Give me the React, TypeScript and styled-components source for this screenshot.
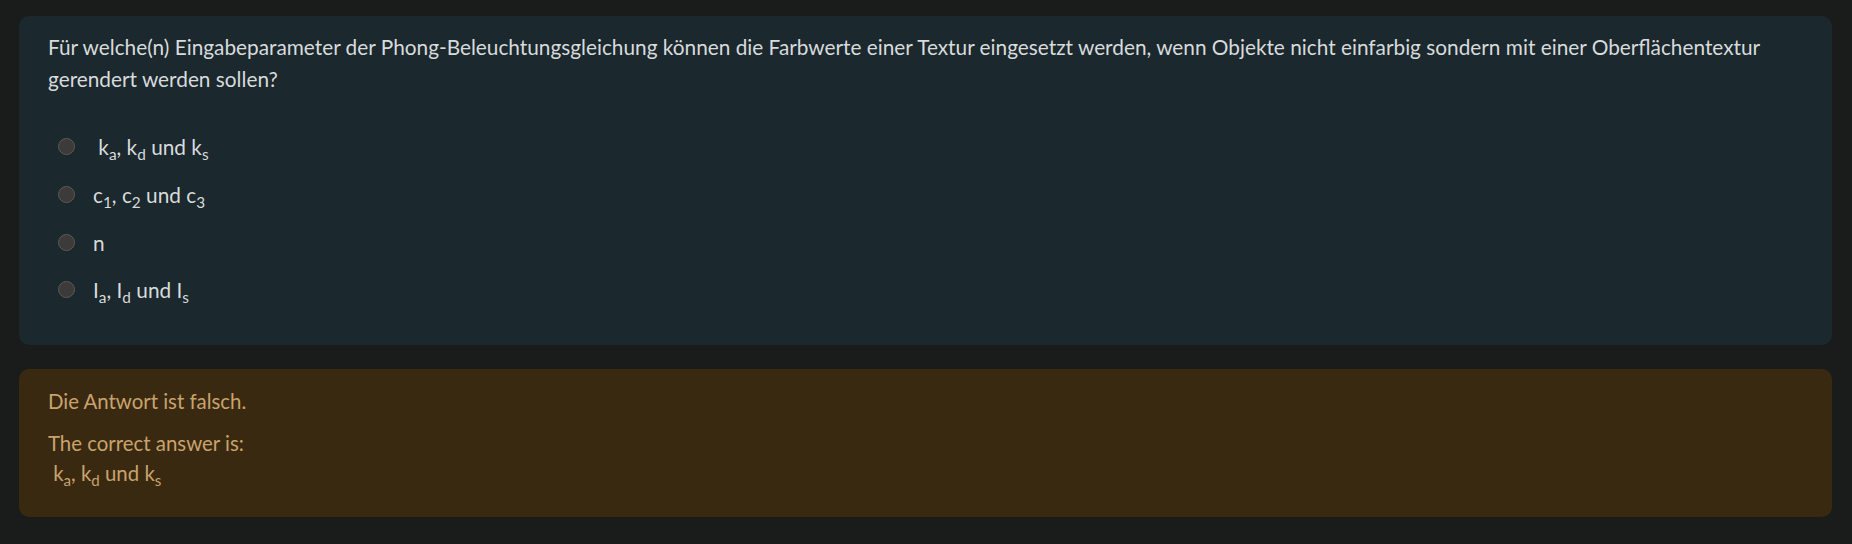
import React from 'react'
import styled, { createGlobalStyle } from 'styled-components'

const GlobalStyle = createGlobalStyle`
  html, body {
    margin: 0;
    padding: 0;
    background: #1a1b1b;
  }
  body {
    font-family: Lato, 'Noto Sans', sans-serif;
  }
`

const Page = styled.div`
  padding: 16px 20px 27px 19px;
  display: flex;
  flex-direction: column;
  gap: 24px;
`

const Card = styled.div<{ $tone: 'question' | 'wrong' }>`
  border-radius: 10px;
  background: ${p => (p.$tone === 'question' ? '#1b282d' : '#3a2911')};
  color: ${p => (p.$tone === 'question' ? '#d8dbdc' : '#c9a36d')};
`

const QuestionCard = styled(Card)`
  padding: 15px 28px 30px 29px;
  height: 329px;
  box-sizing: border-box;
`

const FeedbackCard = styled(Card)`
  padding: 17px 28px 20px 29px;
  height: 148px;
  box-sizing: border-box;
`

const QuestionText = styled.div`
  font-size: 20.8px;
  line-height: 32px;
  margin-bottom: 28px;
`

const Options = styled.div`
  display: flex;
  flex-direction: column;
`

const Option = styled.label`
  display: flex;
  align-items: center;
  height: 47.7px;
  font-size: 20.8px;
`

const Radio = styled.span`
  width: 17px;
  height: 17px;
  margin-left: 10px;
  margin-right: 18px;
  border-radius: 50%;
  background: #3d3b3a;
  border: 1.5px solid #5b5957;
  box-sizing: border-box;
  flex-shrink: 0;
`

const Sub = styled.sub`
  font-size: 0.74em;
  vertical-align: -0.32em;
  line-height: 0;
`

const FeedbackLine = styled.div<{ $gap?: number }>`
  font-size: 20.4px;
  line-height: 30px;
  margin-top: ${p => p.$gap ?? 0}px;
`

const Terms = ({ v }: { v: string }) => (
  <>
    {' '}
    {v}
    <Sub>a</Sub>, {v}
    <Sub>d</Sub> und {v}
    <Sub>s</Sub>
  </>
)

export default function App() {
  return (
    <>
      <GlobalStyle />
      <Page>
        <QuestionCard $tone="question">
          <QuestionText>
            Für welche(n) Eingabeparameter der Phong-Beleuchtungsgleichung können die Farbwerte einer Textur
            eingesetzt werden, wenn Objekte nicht einfarbig sondern mit einer Oberflächentextur gerendert werden
            sollen?
          </QuestionText>
          <Options>
            <Option>
              <Radio />
              <span style={{ whiteSpace: 'pre' }}>
                <Terms v="k" />
              </span>
            </Option>
            <Option>
              <Radio />
              <span>
                c<Sub>1</Sub>, c<Sub>2</Sub> und c<Sub>3</Sub>
              </span>
            </Option>
            <Option>
              <Radio />
              <span>n</span>
            </Option>
            <Option>
              <Radio />
              <span>
                I<Sub>a</Sub>, I<Sub>d</Sub> und I<Sub>s</Sub>
              </span>
            </Option>
          </Options>
        </QuestionCard>
        <FeedbackCard $tone="wrong">
          <FeedbackLine>Die Antwort ist falsch.</FeedbackLine>
          <FeedbackLine $gap={12}>The correct answer is:</FeedbackLine>
          <FeedbackLine style={{ whiteSpace: 'pre' }}>
            <Terms v="k" />
          </FeedbackLine>
        </FeedbackCard>
      </Page>
    </>
  )
}
